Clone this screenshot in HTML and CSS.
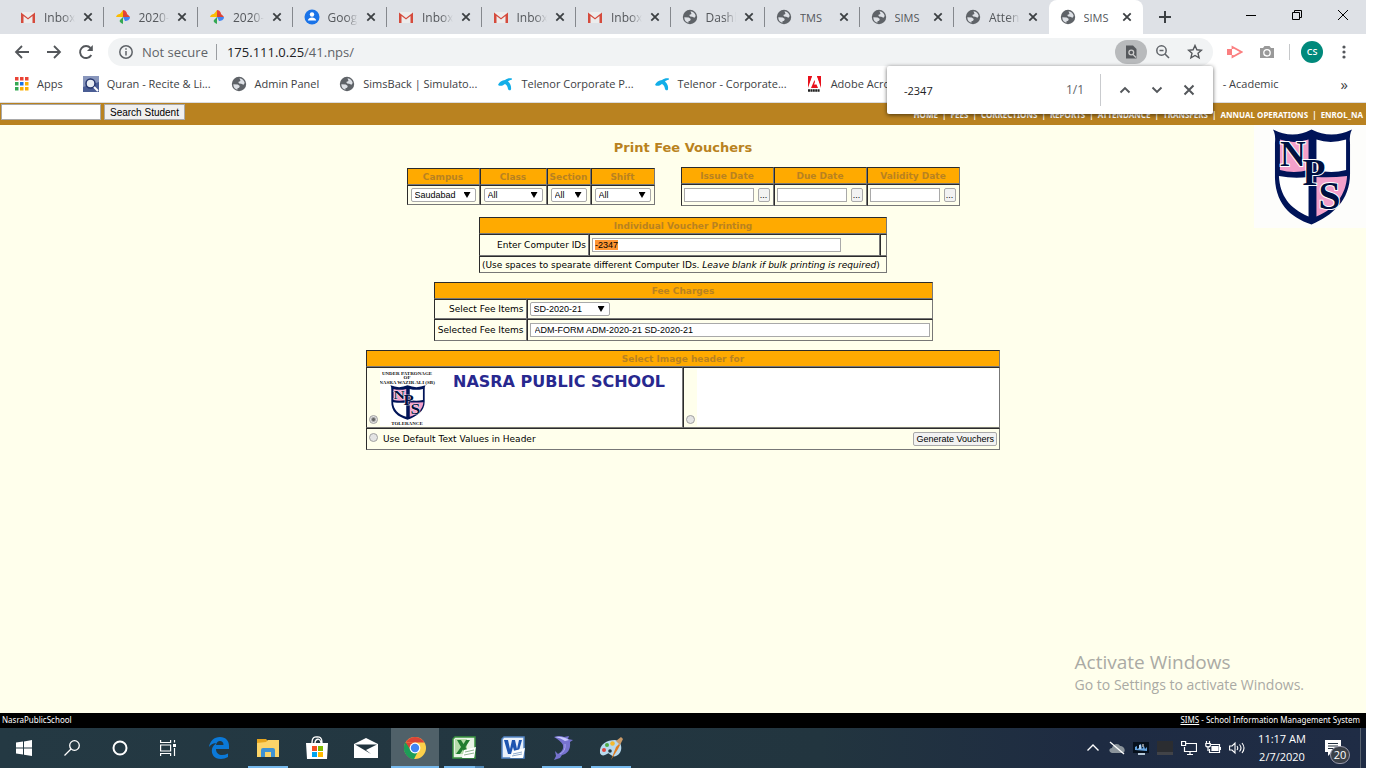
FILE: index.html
```html
<!DOCTYPE html>
<html lang="en">
<head>
<meta charset="utf-8">
<title>SIMS - Print Fee Vouchers</title>
<link rel="stylesheet" href="styles.css">
</head>
<body>
<svg class="sprite" aria-hidden="true">
  <symbol id="gmail" viewBox="0 0 16 16"><path d="M2 3h12v11H2z" fill="#ececec"/><path d="M1 14V3.500l7 5.500 7-5.500V14h-2.500V7L8 10.500 3.500 7v7z" fill="#d54b3d"/></symbol>
  <symbol id="photos" viewBox="0 0 16 16"><path d="M8 1c3 0 4 3 4 4l-4 3z" fill="#ea4335"/><path d="M8 1v7H4C4 5 6 4 8 1z" fill="#fbbc04"/><path d="M15 8c0 3-3 4-5 4L8 8z" fill="#4285f4"/><path d="M8 15c-3-1-4-3-3-4l3-3z" fill="#34a853"/><path d="M1 8c1-3 3-3 4-3l3 3z" fill="#fbbc04"/><path d="M8 5c3-1 5 0 7 3H8z" fill="#db4437"/></symbol>
  <symbol id="gaccount" viewBox="0 0 16 16"><circle cx="8" cy="8" r="7.500" fill="#1a73e8"/><circle cx="8" cy="5.500" r="2.200" fill="#fff"/><path d="M3.800 11.500c.7-4 7.700-4 8.400 0z" fill="#fff"/></symbol>
  <symbol id="globe" viewBox="0 0 16 16"><circle cx="8" cy="8" r="7.200" fill="#5f6368"/><path d="M2.300 8.200l4.500.3 2 1.400-.7 1.800-1.600.5-.1 1.600C4 13.200 2.200 11 2.300 8.200zM8.500 2.300c2.800.2 4.700 2.400 5.200 4.700l-1.200 1.800-2.300-1-2-.2-1-1.500 2.300-1z" fill="#dee1e6"/></symbol>
  <symbol id="close" viewBox="0 0 16 16"><path d="M4.300 4.300l7.400 7.400M11.700 4.300l-7.400 7.400" stroke="#3c4043" stroke-width="1.800"/></symbol>
  <symbol id="telenor" viewBox="0 0 16 16"><path d="M1 9c1-3 4-4.500 7-5 2-1.500 4.500-2 7-1.500l-.5 1.500c-1.500 0-2.500.5-3.500 1.500 2.500 2 3.500 5 3 8-1 1.500-2.500.8-3-.5-.3-2.500-1.500-4.500-3-5-1.500 1-4 3-7 1z" fill="#12aee8"/></symbol>
  <symbol id="shield" viewBox="0 0 82 98" preserveAspectRatio="none">
    <path d="M1 1q20 10 39 0 20 10 41 0-3 5-2 14v31c0 27-18 42-39 51C18 90 2 75 3 45V15Q4 6 1 1z" fill="#001458"/>
    <path d="M8 11q14 5 29 0v31q-15 4-29 0z" fill="#f3a0ca"/>
    <path d="M45 11q14 5 30 0v31q-15 4-30 0z" fill="#fff"/>
    <path d="M7 48q15 3 30 1v40C18 81 8 68 7 48z" fill="#fff"/>
    <path d="M45 49q15 1 31-1c-1 19-12 33-31 41z" fill="#f3a0ca"/>
    <g font-family="Liberation Serif, serif" font-weight="bold" fill="#001040" stroke="#fff" stroke-width="2" paint-order="stroke">
      <text x="8" y="38" font-size="36">N</text>
      <text x="31" y="57" font-size="38">P</text>
      <text x="47" y="81" font-size="40">S</text>
    </g>
  </symbol>
</svg>

<div class="tabstrip">
  <div class="tab"><svg class="i16"><use href="#gmail"/></svg><span class="tab-title">Inbox (</span><button class="x" aria-label="Close tab"><svg class="i16"><use href="#close"/></svg></button></div>
  <div class="tab"><svg class="i16"><use href="#photos"/></svg><span class="tab-title">2020-0</span><button class="x" aria-label="Close tab"><svg class="i16"><use href="#close"/></svg></button></div>
  <div class="tab"><svg class="i16"><use href="#photos"/></svg><span class="tab-title">2020-0</span><button class="x" aria-label="Close tab"><svg class="i16"><use href="#close"/></svg></button></div>
  <div class="tab"><svg class="i16"><use href="#gaccount"/></svg><span class="tab-title">Google</span><button class="x" aria-label="Close tab"><svg class="i16"><use href="#close"/></svg></button></div>
  <div class="tab"><svg class="i16"><use href="#gmail"/></svg><span class="tab-title">Inbox (</span><button class="x" aria-label="Close tab"><svg class="i16"><use href="#close"/></svg></button></div>
  <div class="tab"><svg class="i16"><use href="#gmail"/></svg><span class="tab-title">Inbox (</span><button class="x" aria-label="Close tab"><svg class="i16"><use href="#close"/></svg></button></div>
  <div class="tab"><svg class="i16"><use href="#gmail"/></svg><span class="tab-title">Inbox (</span><button class="x" aria-label="Close tab"><svg class="i16"><use href="#close"/></svg></button></div>
  <div class="tab"><svg class="i16"><use href="#globe"/></svg><span class="tab-title">Dashb</span><button class="x" aria-label="Close tab"><svg class="i16"><use href="#close"/></svg></button></div>
  <div class="tab"><svg class="i16"><use href="#globe"/></svg><span class="tab-title short">TMS</span><button class="x" aria-label="Close tab"><svg class="i16"><use href="#close"/></svg></button></div>
  <div class="tab"><svg class="i16"><use href="#globe"/></svg><span class="tab-title short">SIMS</span><button class="x" aria-label="Close tab"><svg class="i16"><use href="#close"/></svg></button></div>
  <div class="tab before-active"><svg class="i16"><use href="#globe"/></svg><span class="tab-title">Attend</span><button class="x" aria-label="Close tab"><svg class="i16"><use href="#close"/></svg></button></div>
  <div class="tab active"><svg class="i16"><use href="#globe"/></svg><span class="tab-title short">SIMS</span><button class="x" aria-label="Close tab"><svg class="i16"><use href="#close"/></svg></button></div>
  <button class="newtab" aria-label="New tab"><svg width="14" height="14" viewBox="0 0 14 14"><path d="M7 1v12M1 7h12" stroke="#3c4043" stroke-width="2"/></svg></button>
  <div class="winctl">
    <button aria-label="Minimize"><svg width="12" height="12"><path d="M1 6.500h10" stroke="#000"/></svg></button>
    <button aria-label="Restore"><svg width="12" height="12" fill="none" stroke="#000"><path d="M1.500 3.500h7v7h-7zM3.500 3.500v-2h7v7h-2"/></svg></button>
    <button aria-label="Close"><svg width="12" height="12"><path d="M1 1l10 10M11 1L1 11" stroke="#000"/></svg></button>
  </div>
</div>

<div class="toolbar">
  <div class="navbtns">
    <button aria-label="Back"><svg class="i16" viewBox="0 0 16 16"><path d="M15 8H2M8 2L2 8l6 6" fill="none" stroke="#54575b" stroke-width="1.800"/></svg></button>
    <button aria-label="Forward"><svg class="i16" viewBox="0 0 16 16"><path d="M1 8h13M8 2l6 6-6 6" fill="none" stroke="#54575b" stroke-width="1.800"/></svg></button>
    <button aria-label="Reload"><svg class="i16" viewBox="0 0 16 16"><path d="M13.300 11A6 6 0 1 1 12.500 4" fill="none" stroke="#54575b" stroke-width="1.900"/><path d="M14.800 1v6H9z" fill="#54575b"/></svg></button>
  </div>
  <div class="omnibox">
    <svg class="i16" viewBox="0 0 16 16"><circle cx="8" cy="8" r="6.200" fill="none" stroke="#5f6368" stroke-width="1.500"/><path d="M8 7v4.500M8 4.300v1.500" stroke="#5f6368" stroke-width="1.500"/></svg>
    <span class="insecure">Not secure</span>
    <span class="url">175.111.0.25<span class="path">/41.nps/</span></span>
    <button class="findchip" aria-label="Find in page"><svg class="i16" viewBox="0 0 16 16"><path d="M3 1.500h7l3.500 3.500v9.500H3z" fill="#55585c"/><circle cx="8.300" cy="8.500" r="2.400" fill="none" stroke="#ccc" stroke-width="1.300"/><path d="M10 10.500l3 3" stroke="#ccc" stroke-width="1.300"/></svg></button>
    <button class="ob" aria-label="Zoom"><svg class="i16" viewBox="0 0 16 16"><circle cx="6.500" cy="6.500" r="4.700" fill="none" stroke="#5f6368" stroke-width="1.500"/><path d="M10 10l4 4M4.500 6.500h4" stroke="#5f6368" stroke-width="1.600"/></svg></button>
    <button class="ob" aria-label="Bookmark"><svg class="i16" viewBox="0 0 16 16"><path d="M8 1.500l1.900 4.300 4.600.4-3.500 3.100 1.100 4.600L8 11.500l-4.100 2.400L5 9.300 1.500 6.200l4.600-.4z" fill="none" stroke="#54575b" stroke-width="1.400"/></svg></button>
  </div>
  <button class="ext" aria-label="Screen recorder"><svg class="i16" viewBox="0 0 16 16"><path d="M0 5h5v6H0z" fill="#fb7f80"/><path d="M5.500 5V3L14.500 8l-9 5v-2" fill="none" stroke="#fb7f80" stroke-width="1.800"/></svg></button>
  <button class="ext" aria-label="Camera"><svg class="i16" viewBox="0 0 16 16"><path d="M1 4h3l1.500-2h5L12 4h3v10H1z" fill="#999"/><circle cx="8" cy="8.800" r="3.200" fill="none" stroke="#fff" stroke-width="1.300"/></svg></button>
  <span class="tooldiv"></span>
  <button class="avatar">CS</button>
  <button class="ext menubtn" aria-label="Menu"><svg class="i16" viewBox="0 0 16 16" fill="#54575b"><circle cx="8" cy="3" r="1.600"/><circle cx="8" cy="8" r="1.600"/><circle cx="8" cy="13" r="1.600"/></svg></button>

  <div class="findbar" role="search">
    <input class="findtext" aria-label="Find in page" value="-2347">
    <span class="count">1/1</span>
    <button aria-label="Previous"><svg class="i16" viewBox="0 0 16 16"><path d="M3.500 10.500L8 6l4.500 4.500" fill="none" stroke="#54575b" stroke-width="1.900"/></svg></button>
    <button aria-label="Next"><svg class="i16" viewBox="0 0 16 16"><path d="M3.500 5.500L8 10l4.500-4.500" fill="none" stroke="#54575b" stroke-width="1.900"/></svg></button>
    <button aria-label="Close find bar"><svg class="i16" viewBox="0 0 16 16"><path d="M3.500 3.500l9 9M12.500 3.500l-9 9" stroke="#54575b" stroke-width="2"/></svg></button>
  </div>
</div>

<nav class="bookmarks" aria-label="Bookmarks">
  <a href="#" class="bm"><svg width="14" height="14" viewBox="0 0 14 14"><path d="M0 0h3.500v3.500H0zM5 0h3.500v3.500H5zM10 0h3.500v3.500H10z" fill="#ea4335"/><path d="M0 5h3.500v3.500H0z" fill="#34a853"/><path d="M5 5h3.500v3.500H5z" fill="#1a73e8"/><path d="M10 5h3.500v3.500H10zM5 10h3.500v3.500H5zM10 10h3.500v3.500H10z" fill="#fbaf04"/><path d="M0 10h3.500v3.500H0z" fill="#34a853"/></svg><span>Apps</span></a>
  <a href="#" class="bm"><svg class="i16" viewBox="0 0 16 16"><path d="M0 0h16v16H0z" fill="#4a5d94"/><path d="M0 0h16v6L0 11z" fill="#8896bc"/><circle cx="7.500" cy="7.500" r="4.500" fill="#e9edf3" stroke="#24356e" stroke-width="1.500"/><path d="M11 11l4 4" stroke="#fff" stroke-width="2"/></svg><span>Quran - Recite &amp; Li...</span></a>
  <a href="#" class="bm"><svg class="i16"><use href="#globe"/></svg><span>Admin Panel</span></a>
  <a href="#" class="bm"><svg class="i16"><use href="#globe"/></svg><span>SimsBack | Simulato...</span></a>
  <a href="#" class="bm"><svg class="i16"><use href="#telenor"/></svg><span>Telenor Corporate P...</span></a>
  <a href="#" class="bm"><svg class="i16"><use href="#telenor"/></svg><span>Telenor - Corporate...</span></a>
  <a href="#" class="bm"><svg class="i16" viewBox="0 0 16 16"><path d="M1 0h13v12H1z" fill="#e8101b"/><path d="M5 0h5l4 12h-3L9.500 8.500H7L8 6 7.500 4 4 12H1z" fill="#fff"/><path d="M1 0h4L1 10zM14 0h-4l4 10z" fill="#e8101b"/><path d="M1 14.500h12" stroke="#222" stroke-width="2.500" stroke-dasharray="2 .4"/></svg><span>Adobe Acro</span></a>
  <a href="#" class="bm academic">- Academic</a>
  <button class="more" aria-label="More bookmarks">»</button>
</nav>

<header class="sitebar">
  <form class="search"><input type="text" aria-label="Student"><button type="button">Search Student</button></form>
  <nav class="menu" aria-label="Main"><a href="#">HOME</a> | <a href="#">FEES</a> | <a href="#">CORRECTIONS</a> | <a href="#">REPORTS</a> | <a href="#">ATTENDANCE</a> | <a href="#">TRANSFERS</a> | <a href="#">ANNUAL OPERATIONS</a> | <a href="#">ENROL_NA</a></nav>
</header>

<main class="page">
  <div class="content">
    <h1>Print Fee Vouchers</h1>
    <div class="filters">
      <table class="grid campus">
        <tr><th>Campus</th><th>Class</th><th>Section</th><th>Shift</th></tr>
        <tr>
          <td><span class="sel"><select aria-label="Campus"><option>Saudabad</option></select></span></td>
          <td><span class="sel"><select aria-label="Class"><option>All</option></select></span></td>
          <td><span class="sel"><select aria-label="Section"><option>All</option></select></span></td>
          <td><span class="sel"><select aria-label="Shift"><option>All</option></select></span></td>
        </tr>
      </table>
      <table class="grid dates">
        <tr><th>Issue Date</th><th>Due Date</th><th>Validity Date</th></tr>
        <tr>
          <td><div class="date"><input type="text" aria-label="Issue Date"><button>...</button></div></td>
          <td><div class="date"><input type="text" aria-label="Due Date"><button>...</button></div></td>
          <td><div class="date"><input type="text" aria-label="Validity Date"><button>...</button></div></td>
        </tr>
      </table>
    </div>

    <table class="grid individual">
      <colgroup><col class="c-id"><col><col class="c-thin"></colgroup>
      <tr><th colspan="3">Individual Voucher Printing</th></tr>
      <tr class="tall"><td class="lbl"><label for="ids">Enter Computer IDs</label></td><td><input id="ids" type="text" value="-2347"></td><td></td></tr>
      <tr><td colspan="3" class="note">(Use spaces to spearate different Computer IDs. <i>Leave blank if bulk printing is required</i>)</td></tr>
    </table>

    <table class="grid charges">
      <colgroup><col class="c-fee"><col></colgroup>
      <tr><th colspan="2">Fee Charges</th></tr>
      <tr><td class="lbl"><label for="fee">Select Fee Items</label></td><td><span class="sel feesel"><select id="fee"><option>SD-2020-21</option></select></span></td></tr>
      <tr class="tall"><td class="lbl"><label for="items">Selected Fee Items</label></td><td><input id="items" type="text" value="ADM-FORM ADM-2020-21 SD-2020-21"></td></tr>
    </table>

    <table class="grid headers">
      <tr><th colspan="2">Select Image header for</th></tr>
      <tr>
        <td><div class="choice"><input type="radio" name="hdr" aria-label="Nasra Public School header" checked>
          <div class="banner">
            <svg width="60" height="57" viewBox="0 0 60 57"><g font-family="Liberation Serif, serif" font-weight="bold" font-size="5" text-anchor="middle" fill="#111"><text x="27" y="6">UNDER PATRONAGE</text><text x="27" y="10">OF</text><text x="27" y="15">NASRA WAZIR ALI (SB)</text><text x="27" y="56">TOLERANCE</text></g><use href="#shield" x="10" y="16" width="36" height="35"/></svg>
            <strong>NASRA PUBLIC SCHOOL</strong>
          </div></div></td>
        <td><div class="choice"><input type="radio" name="hdr" aria-label="Blank header"><div class="banner"></div></div></td>
      </tr>
      <tr class="tall"><td colspan="2"><div class="submit"><label><input type="radio" name="hdr"> <span>Use Default Text Values in Header</span></label><button>Generate Vouchers</button></div></td></tr>
    </table>
  </div>
  <div class="logo"><svg viewBox="0 0 82 98" role="img" aria-label="NPS"><use href="#shield"/></svg></div>
  <div class="activate"><p class="big">Activate Windows</p><p>Go to Settings to activate Windows.</p></div>
</main>

<footer class="sitefoot"><span>NasraPublicSchool</span><span><a href="#">SIMS</a> - School Information Management System</span></footer>

<div class="taskbar">
  <div class="sys">
    <button aria-label="Start"><svg width="16" height="16"><path d="M0 2.500L7 1.500V7.500H0zM8 1.400L16 0V7.500H8zM0 8.500H7V14.500L0 13.500zM8 8.500H16V16L8 14.700z" fill="#fff"/></svg></button>
    <button aria-label="Search"><svg width="16" height="16" fill="none" stroke="#fff" stroke-width="1.300"><circle cx="10.500" cy="5.500" r="4.800"/><path d="M7 9L.5 15.500"/></svg></button>
    <button aria-label="Cortana"><svg width="16" height="16"><circle cx="8" cy="8" r="6.500" fill="none" stroke="#fff" stroke-width="2"/></svg></button>
    <button aria-label="Task view"><svg width="16" height="16" fill="none" stroke="#fff" stroke-width="1.200"><path d="M.6 0v2.500h10V0M.6 16v-2.500h10V16M.6 5h10v6H.6zM14.500 0v2.500M14.500 8v8"/><path d="M13 4h3v3h-3z" fill="#fff" stroke="none"/></svg></button>
  </div>
  <div class="apps">
    <button aria-label="Edge"><svg width="22" height="22" viewBox="0 0 22 22"><path d="M1 10C2 4 6 0 12 0c6 0 9 4 9 9v3H8c0 4 3 6 6 6 2 0 4-.5 6-1.500V20c-2 1.300-5 2-7 2-7 0-10-5-9-10 .5-3 3-5 5-6C5 6 3 7.500 1 10zm7-2h7.500C15.500 5.500 14 4 12 4S8.500 5.500 8 8z" fill="#0b79d8"/></svg></button>
    <button class="run" aria-label="File Explorer"><svg width="22" height="20" viewBox="0 0 22 20"><path d="M0 1h9l2 2h10v16H0z" fill="#e6a51e"/><path d="M0 5l9-1 2-2h11v17H0z" fill="#fcd468"/><path d="M4 19v-7q0-2 2-2h10q2 0 2 2v7h-4v-5H8v5z" fill="#3f92d2"/></svg></button>
    <button aria-label="Store"><svg width="24" height="24" viewBox="0 0 24 24"><path d="M7 7c0-7 4-6 5-6s5-1 5 6M10 7c0-4 5-6 6 0" fill="none" stroke="#fff" stroke-width="1.300"/><path d="M1 7h22l-1 16H2z" fill="#fff"/><path d="M7 10h5v5H7z" fill="#f25022"/><path d="M13 10h5v5h-5z" fill="#7fba00"/><path d="M7 16h5v5H7z" fill="#00a4ef"/><path d="M13 16h5v5h-5z" fill="#ffb900"/></svg></button>
    <button aria-label="Mail"><svg width="24" height="20" viewBox="0 0 24 20"><path d="M0 6l12-6 12 6v14H0z" fill="#fff"/><path d="M1 6.500h22L12 12l5 4z" fill="#21343e"/></svg></button>
    <button class="run current" aria-label="Chrome"><svg width="24" height="24" viewBox="0 0 24 24"><circle cx="12" cy="12" r="11" fill="#fdd04a"/><path d="M2.500 6.500A11 11 0 0 1 21.500 6.500H12z" fill="#db4437"/><path d="M2.500 6.500A11 11 0 0 0 11 23l4.500-8.500L12 12z" fill="#1d9d58"/><path d="M2.500 6.500L7.500 14l4.500-7.500z" fill="#db4437"/><path d="M2.500 6.500L7.500 14.500 12 17l-1 6A11 11 0 0 1 2.500 6.500z" fill="#1d9d58"/><circle cx="12" cy="12" r="5.400" fill="#fff"/><circle cx="12" cy="12" r="4.200" fill="#4285f4"/></svg></button>
    <button class="run multi" aria-label="Excel"><svg width="24" height="24" viewBox="0 0 24 24"><path d="M3 1h20v21H1V3z" fill="#e8f3e5" stroke="#3a9440" stroke-width="1.500"/><path d="M3 3h12v15H3z" fill="#b6dcaa"/><path d="M5 4h4l2.500 4L14 4h4l-4.500 7 4 7h-4l-2.500-4.500L8 18H4l5-7z" fill="#217c30"/><path d="M12 14l12-3-2 11H10z" fill="#fff"/><path d="M13 16l9-2M12 19l10-2" stroke="#91b691"/></svg></button>
    <button aria-label="Word"><svg width="24" height="24" viewBox="0 0 24 24"><path d="M3 1h20v21H1V3z" fill="#eaf1fb" stroke="#5485c5" stroke-width="1.500"/><path d="M3 4h4l2 9 2-9h3l2 9 2-9h3l-4 14h-3l-2-7-2 7H7z" fill="#1e55b0"/><path d="M12 15l12-3-2 10H9z" fill="#fff"/><path d="M12 18l9-2M11 20l10-2" stroke="#8eabcf"/></svg></button>
    <button class="run" aria-label="Dolphin"><svg width="24" height="26" viewBox="0 0 24 26"><path d="M4 2Q10 0 14 2l5-1-1 3 5 1-3 2c1 8-3 12-8 13l-2 3-6 2 2-4-1-5 3 3q6-3 5-9Q11 6 4 2z" fill="#7773d0"/><path d="M5 2q8-1 14 3l-4 1Q11 3 5 2z" fill="#c9cbff"/><path d="M15 9q1 7-5 10" fill="none" stroke="#a9a6ef"/></svg></button>
    <button class="run" aria-label="Paint"><svg width="24" height="24" viewBox="0 0 24 24"><path d="M1 17C0 8 8 4 16 4c7 1 8 10 4 14-3 3-6 3-8 1-2-1-2-3-4-1-3 2-6 2-7-1z" fill="#b7d9ee"/><circle cx="5" cy="14" r="2" fill="#df4740"/><circle cx="8" cy="9" r="2" fill="#4dab46"/><circle cx="13.500" cy="7.500" r="2.300" fill="#f5b92c"/><circle cx="11" cy="15" r="1.800" fill="#21343e"/><path d="M12 24l5-13 3-3 1 1-2 4z" fill="#e07b1f"/><path d="M17 5l5-4 2 2-3 6z" fill="#c99a68"/></svg></button>
  </div>
  <div class="tray">
    <button aria-label="Show hidden icons"><svg class="i16" viewBox="0 0 16 16"><path d="M2.500 10.500L8 5l5.500 5.500" fill="none" stroke="#fff" stroke-width="1.400"/></svg></button>
    <button aria-label="OneDrive"><svg class="i16" viewBox="0 0 16 16"><path d="M3 13c-4-1-3-5 0-5 1-5 7-5 8-2 5 0 6 6 3 7z" fill="#8b949b"/><path d="M1 2l14 12" stroke="#fff" stroke-width="1.300"/></svg></button>
    <button aria-label="Display"><svg class="i16" viewBox="0 0 16 16"><path d="M0 2h16v11H0z" fill="#06101c"/><path d="M2 10V7l2-1v3l2-1V5l2-1 1 5 2-3 1 3 2-2v4z" fill="#64a3e0"/><path d="M5 14h7" stroke="#b5c8d8" stroke-width="2"/><path d="M7 5v4M10 4v3" stroke="#fff"/></svg></button>
    <button aria-label="Touchpad"><svg class="i16" viewBox="0 0 16 16"><path d="M0 1h16v14H0z" fill="#2b2d31"/><path d="M0 12h16v3H0z" fill="#414348"/></svg></button>
    <button aria-label="Network"><svg class="i16" viewBox="0 0 16 16" fill="none" stroke="#fff" stroke-width="1.200"><path d="M5 3.500h10.500v8H3.500V7M9 11.500v3M6 14.500h6M.6 1.500h4v4h-4z"/></svg></button>
    <button aria-label="Battery"><svg class="i16" viewBox="0 0 16 16" fill="none" stroke="#fff" stroke-width="1.200"><path d="M6 4.500h8.500v8H4.500V9M15.500 7v3M1.500 1v2M4.500 1v2M.8 3.500h4.500V6Q3 8 .8 6zM3 7v4"/><path d="M7 6.500h6v4H7z" fill="#fff"/></svg></button>
    <button aria-label="Volume"><svg class="i16" viewBox="0 0 16 16" fill="none" stroke="#fff" stroke-width="1.100"><path d="M.6 6h2.500L6 3v10L3 10H.6zM8 6q1.500 2 0 4M10.500 4.500q3 3.500 0 7M13 3q4 5 0 10"/></svg></button>
  </div>
  <div class="clock"><span>11:17 AM</span><span>2/7/2020</span></div>
  <button class="notif" aria-label="Notifications"><svg width="18" height="18" viewBox="0 0 18 18"><path d="M1 1h16v12H8l-4 4v-4H1z" fill="#fff"/><path d="M4 4.500h10M4 7h10M4 9.500h10" stroke="#22303f"/></svg><span class="badge">20</span></button>
</div>
</body>
</html>
```
FILE: styles.css
```css
* { box-sizing: border-box; }
body {
  margin: 0;
  padding: 0 22px 2px 0;
  min-height: 100vh;
  display: flex;
  flex-direction: column;
  background: #fff;
  font-family: "Open Sans", "Noto Sans", sans-serif;
  font-size: 11px;
  color: #3c4043;
}
button { padding: 0; border: 0; background: none; font: inherit; color: inherit; display: flex; align-items: center; justify-content: center; flex: none; }
a { color: inherit; text-decoration: none; }
svg { display: block; flex: none; }
.sprite { position: absolute; width: 0; height: 0; }
.i16 { width: 16px; height: 16px; }

/* browser chrome */
.tabstrip { display: flex; height: 34px; padding-left: 9px; background: #dee1e6; }
.tab { flex: 1; min-width: 0; display: flex; align-items: center; padding: 0 8px 0 11px; position: relative; }
.tab::after { content: ""; position: absolute; right: 0; top: 7px; width: 1px; height: 20px; background: #85888d; }
.tab.before-active::after, .tab.active::after { display: none; }
.tab.active { background: #fff; border-radius: 8px 8px 0 0; }
.tab-title { flex: 1; min-width: 0; margin: 0 5px 0 8px; overflow: hidden; white-space: nowrap; font-size: 12px; color: #54575b; mask-image: linear-gradient(90deg, #000 60%, transparent); }
.tab-title.short { font-size: 11px; mask-image: none; }
.newtab { width: 44px; }
.winctl { display: flex; width: 179px; justify-content: flex-end; }
.winctl button { width: 46px; height: 29px; }

.toolbar { display: flex; align-items: center; height: 35px; position: relative; }
.navbtns { display: flex; padding-left: 6px; margin-right: 6px; }
.navbtns button { width: 32px; height: 32px; }
.omnibox { flex: 1; display: flex; align-items: center; height: 28px; padding: 0 2px 0 10px; border-radius: 14px; background: #f1f3f4; font-size: 13px; }
.insecure { margin-left: 8px; padding-right: 8px; line-height: 16px; border-right: 1px solid #9a9da1; color: #5f6368; }
.url { flex: 1; margin-left: 10px; color: #202124; }
.path { color: #5f6368; }
.findchip { width: 32px; height: 24px; border-radius: 12px; background: #b8babc; }
.ob { width: 32px; height: 28px; }
.ext { width: 32px; height: 32px; }
.omnibox + .ext { margin-left: 6px; }
.tooldiv { width: 1px; height: 16px; margin: 0 11px 0 6px; background: #c6c8ca; }
.avatar { width: 22px; height: 22px; margin-right: 5px; border-radius: 50%; background: #00897b; color: #fff; font-size: 9px; font-weight: 600; }
.menubtn { margin-right: 6px; }

.findbar { position: absolute; z-index: 2; right: 153px; top: 32px; display: flex; align-items: center; width: 326px; height: 48px; padding: 0 8px 0 17px; background: #fff; border-radius: 2px; box-shadow: 0 1px 4px rgba(0, 0, 0, .6); }
.findtext { flex: 1; min-width: 0; padding: 0; border: 0; outline: 0; background: none; font: 11px "Open Sans", sans-serif; color: #202124; }
.count { padding-right: 16px; margin-right: 8px; line-height: 32px; border-right: 1px solid #c9cbce; font-size: 12px; color: #5f6368; }
.findbar button { width: 32px; height: 32px; }

.bookmarks { display: flex; align-items: center; height: 34px; padding: 0 18px 4px 15px; border-bottom: 1px solid #dadce0; white-space: nowrap; }
.bm { display: flex; align-items: center; gap: 8px; margin-right: 20px; }
.academic { margin-left: auto; margin-right: 62px; }
.more { font-size: 15px; }

/* school site */
.sitebar { display: flex; align-items: center; justify-content: space-between; height: 22px; padding: 0 3px 0 1px; background: #b98220; }
.search { display: flex; gap: 3px; margin-bottom: 4px; }
.sitebar input { width: 100px; height: 16px; padding: 0 2px; border: 1px solid #a9a9a9; background: #fff; }
.sitebar button { height: 16px; padding: 0 5px; border: 1px solid #a9a9a9; background: #f0f0f0; color: #000; font: 10px "Liberation Sans", Arial, sans-serif; }
.menu { color: #fff; font: bold 8px "Noto Sans", "Open Sans", sans-serif; white-space: pre; }
.menu a + a { padding-left: 2px; }
.menu a:not(:last-child) { padding-right: 2px; }

.page { flex: 1; display: grid; grid-template-columns: 1fr auto 1fr; grid-template-rows: auto 1fr; background: #ffffec; color: #000; font: 9px "DejaVu Sans", Verdana, sans-serif; }
.content { grid-column: 2; grid-row: 1 / 3; display: flex; flex-direction: column; align-items: center; }
.content h1 { margin: 13px 0 9px; font-size: 13px; line-height: 20px; color: #b98220; }
.logo { grid-column: 3; grid-row: 1; justify-self: end; padding: 3px 13px 2px 18px; background: #fdfdfb; }
.logo svg { width: 81px; height: 98px; }
.activate { grid-column: 3; grid-row: 2; justify-self: end; align-self: end; padding: 0 62px 18px 0; color: #aaaaa4; font: 14px "Open Sans", sans-serif; white-space: nowrap; }
.activate p { margin: 0; line-height: 20px; }
.activate .big { font-size: 19px; line-height: 26px; }

.grid { border-spacing: 0; table-layout: fixed; }
.grid th, .grid td { padding: 0 2px; border: 1px solid; border-color: #2b2b2b #777 #777 #2b2b2b; }
.grid th { height: 17px; background: #ffaa00; color: #b98220; white-space: nowrap; }
.grid td { height: 20px; }
.grid .tall td { height: 22px; }
.grid .lbl { text-align: right; white-space: nowrap; }
.grid input[type="text"], .grid select { height: 14px; border: 1px solid #a9a9a9; background-color: #fff; color: #000; font: 9px "Liberation Sans", Arial, sans-serif; }
.grid input[type="text"] { display: block; padding: 0 4px; }
.grid button { border: 1px solid #a9a9a9; border-radius: 2px; background: #f2f2f2; color: #000; font: 9px "Liberation Sans", Arial, sans-serif; height: 14px; }
.sel { position: relative; display: block; }
.sel select { display: block; width: 100%; appearance: none; padding: 0 3px; border-radius: 2px; }
.sel::after { content: ""; position: absolute; right: 5px; top: 4px; width: 7px; height: 6px; background: #000; clip-path: polygon(0 0, 100% 0, 50% 100%); }

.filters { display: flex; align-items: center; gap: 26px; margin-bottom: 11px; }
.campus { width: 248px; }
.campus th:nth-child(1) { width: 73px; }
.campus th:nth-child(2) { width: 67px; }
.campus th:nth-child(3) { width: 44px; }
.campus th { padding: 0; }
.campus td { padding: 0 3px; }
.dates { width: 279px; }
.dates td { height: 22px; padding-right: 3px; }
.date { display: flex; gap: 4px; }
.date input { flex: 1; min-width: 0; }
.date button { width: 12px; }

.individual { width: 408px; margin-bottom: 9px; }
.c-id { width: 110px; }
.c-thin { width: 7px; }
.note { white-space: nowrap; }
.grid .note { height: 17px; }
#ids { width: 249px; padding: 0 2px; background: linear-gradient(#ff9632, #ff9632) 2px 1px / 23px 10px no-repeat #fff; }

.charges { width: 499px; margin-bottom: 9px; }
.c-fee { width: 93px; }
.feesel { width: 80px; }
#items { width: 100%; }

.headers { width: 634px; }
.choice { display: flex; align-items: flex-end; gap: 2px; }
.grid input[type="radio"] { width: 9px; height: 9px; margin: 0 0 3px; flex: none; appearance: none; border: 1px solid #a0a0a0; border-radius: 50%; background: #e4e4e4; }
.grid input[type="radio"]:checked { background: radial-gradient(#666 0 1px, #e4e4e4 3px); }
.banner { flex: 1; display: flex; align-items: flex-start; gap: 13px; height: 57px; margin: 1px -2px 1px 0; background: #fff; }
.banner strong { font-size: 16px; line-height: 26px; color: #28288f; white-space: nowrap; }
.submit { display: flex; justify-content: space-between; align-items: center; }
.submit label { display: flex; align-items: center; gap: 5px; }
.submit button { padding: 0 2px; }

.sitefoot { display: flex; justify-content: space-between; height: 15px; padding: 0 6px 0 2px; background: #000; color: #fff; font: 8px/13px "Noto Sans", "Open Sans", sans-serif; }
.sitefoot a { text-decoration: underline; }

/* taskbar */
.taskbar { display: flex; height: 40px; background: linear-gradient(90deg, #243943, #22353f 60%, #1e2b42 80%, #1f2c45); color: #fff; }
.sys, .apps, .tray { display: flex; }
.sys button { width: 48px; }
.apps { gap: 1px; margin: 0 auto 0 3px; }
.apps button { width: 48px; position: relative; }
.run::after { content: ""; position: absolute; bottom: 0; left: 4px; right: 4px; height: 2px; background: #76b9ed; }
.current { background: #506169; }
.current::after { left: 0; right: 0; }
.multi::after { background: linear-gradient(90deg, #76b9ed 31px, #4f86b3 31px); }
.tray button { width: 24px; }
.clock { display: flex; flex-direction: column; align-items: center; width: 64px; line-height: 18px; padding-top: 2px; margin-left: 1px; }
.notif { position: relative; width: 47px; padding-right: 8px; margin-right: 5px; border-right: 1px solid #58626f; }
.badge { position: absolute; left: 16px; top: 18px; width: 20px; height: 18px; border: 1px solid #99a; border-radius: 9px; background: #3a4048; font-size: 11px; line-height: 15px; text-align: center; }
```
